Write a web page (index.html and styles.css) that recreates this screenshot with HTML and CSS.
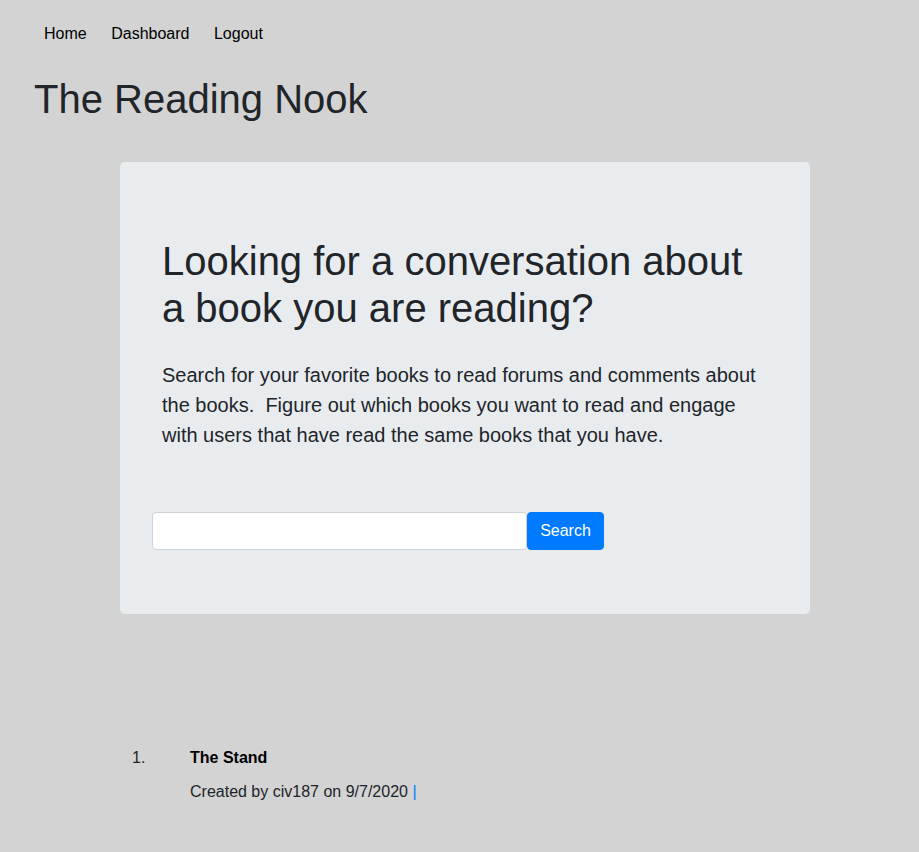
FILE: index.html
```html
<!DOCTYPE html>
<html lang="en">
<head>
<meta charset="utf-8">
<title>The Reading Nook</title>
<link rel="stylesheet" href="styles.css">
</head>
<body>
<nav class="nav">
  <a class="nav-link" href="#">Home</a>
  <a class="nav-link" href="#">Dashboard</a>
  <a class="nav-link" href="#">Logout</a>
</nav>
<h1 class="site-title">The Reading Nook</h1>
<section class="jumbotron">
  <h2 class="hero-title">Looking for a conversation about a book you are reading?</h2>
  <p class="lead">Search for your favorite books to read forums and comments about the books.&nbsp; Figure out which books you want to read and engage with users that have read the same books that you have.</p>
  <form class="search-form">
    <input class="search-input" type="text">
    <button class="search-btn" type="button">Search</button>
  </form>
</section>
<ol class="book-list">
  <li class="book-item">
    <div class="book-body">
      <div class="book-title">The Stand</div>
      <div class="book-meta">Created by civ187 on 9/7/2020 <a class="meta-link" href="#">|</a></div>
    </div>
  </li>
</ol>
</body>
</html>
```
FILE: styles.css
```css
* { box-sizing: border-box; }
html, body { margin: 0; padding: 0; }
body {
  background: #d3d3d3;
  font-family: "Liberation Sans", Arial, sans-serif;
  color: #212529;
  font-size: 16px;
  line-height: 1.5;
  min-height: 852px;
}
.nav {
  display: flex;
  gap: 24.5px;
  padding: 22px 0 0 44px;
  height: 46px;
}
.nav-link {
  color: #000;
  text-decoration: none;
  font-size: 16px;
  line-height: 24px;
}
.site-title {
  margin: 0;
  padding: 29px 0 0 34px;
  font-size: 40px;
  font-weight: 400;
  line-height: 48px;
}
.jumbotron {
  margin: 39px 0 0 120px;
  width: 690px;
  background: #e9ecef;
  border-radius: 4.8px;
  padding: 76px 32px 64px 32px;
}
.hero-title {
  margin: 0 0 0 10px;
  font-size: 40px;
  font-weight: 400;
  line-height: 47px;
  max-width: 600px;
}
.lead {
  margin: 28px 0 0 10px;
  font-size: 20px;
  line-height: 30px;
  max-width: 610px;
}
.search-form {
  display: flex;
  margin-top: 62px;
}
.search-input {
  width: 375px;
  height: 38px;
  border: 1px solid #ced4da;
  border-radius: 4px;
  background: #fff;
  font-size: 16px;
  padding: 6px 12px;
}
.search-btn {
  width: 77px;
  height: 38px;
  border: 1px solid #007bff;
  background: #007bff;
  color: #fff;
  border-radius: 4px;
  font-family: "Liberation Sans", Arial, sans-serif;
  font-size: 16px;
  padding: 0;
}
.book-list {
  margin: 132px 0 0 132px;
  padding: 0;
  list-style: none;
  counter-reset: book;
}
.book-item {
  display: flex;
  counter-increment: book;
}
.book-item::before {
  content: counter(book) ".";
  width: 58px;
  flex: none;
  line-height: 24px;
  color: #212529;
}
.book-title {
  font-weight: 700;
  color: #000;
  line-height: 24px;
}
.book-meta {
  margin-top: 10px;
  line-height: 24px;
}
.meta-link {
  color: #007bff;
  text-decoration: none;
}
```
